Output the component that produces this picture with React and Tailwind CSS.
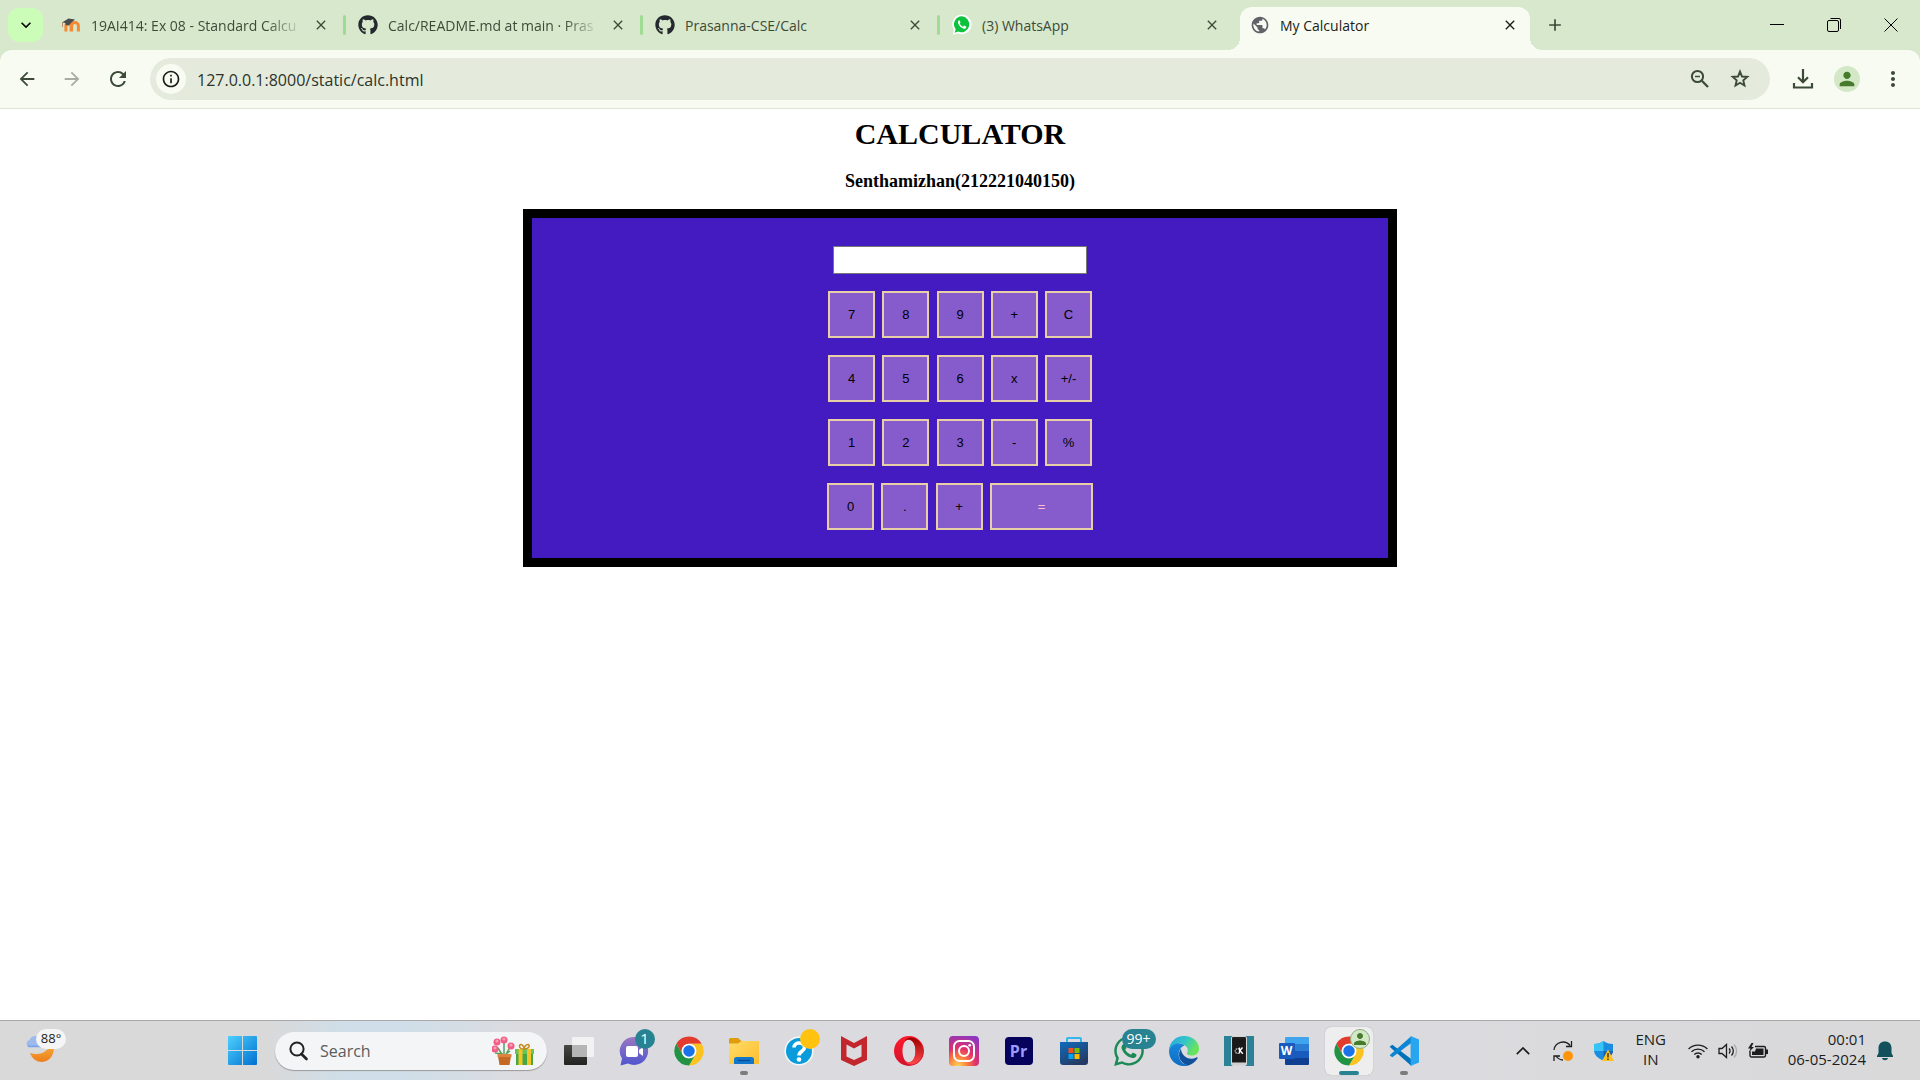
import React from "react";
import {
  MdArrowBack,
  MdArrowForward,
  MdRefresh,
  MdInfoOutline,
  MdPublic,
  MdPerson,
  MdMoreVert,
  MdClose,
  MdAdd,
  MdExpandMore,
} from "react-icons/md";
import { FaWhatsapp, FaGithub } from "react-icons/fa";

/* ---------- browser icons ---------- */

function MoodleIcon() {
  return (
    <svg viewBox="0 0 20 16" className="h-4 w-5 shrink-0">
      <path d="M4.9 14.5V9a2.6 2.6 0 0 1 5.2 0v5.5M10.600 14.500V9a3.300 3.300 0 0 1 6.800 0v5.500" fill="none" stroke="#f58a32" strokeWidth="3" />
      <path d="M1 5.500 7.500 1.500 14 2.500 9.500 6.500 8 8.500 4.500 8V6z" fill="#4b4b4b" />
      <path d="M1.500 5.500V10" stroke="#b98f68" strokeWidth="1" />
    </svg>
  );
}

function WhatsAppFavicon() {
  return (
    <svg viewBox="0 0 20 22" className="h-[22px] w-5 shrink-0">
      <path d="M10 .8a9.400 9.400 0 0 1 0 19.400c-1.600 0-3-.4-4.200-1L.8 20.800l1.300-5A9.500 9.500 0 0 1 10 .8z" fill="#fff" />
      <path d="M10 2.300a8 8 0 1 1-3.900 15.300L2.700 18.700l1-3.500A8 8 0 0 1 10 2.300z" fill="#0ac23c" />
      <path d="M7 6.300c-1.200.8-1.300 2.100-.7 3.400 1 2.300 2.700 4 5 4.800 1.300.5 2.600.2 3-1.300l-.2-.8-1.900-.9-1.200 1.200c-1.500-.6-2.600-1.700-3.300-3.100l.8-1.100-.8-2z" fill="#fff" />
    </svg>
  );
}

function ZoomOutIcon() {
  return (
    <svg viewBox="0 0 20 20" className="size-5" fill="none" stroke="currentColor" strokeWidth="2">
      <circle cx="7.500" cy="7.500" r="5.600" />
      <path d="M11.800 11.800 18 18" strokeWidth="2.300" />
      <path d="M5 7.500h5" strokeWidth="1.500" />
    </svg>
  );
}

function StarIcon() {
  return (
    <svg viewBox="0 0 20 20" className="size-5" fill="none" stroke="currentColor" strokeWidth="1.900">
      <path d="M10 2.600 12 7.500l5.300.4-4 3.500 1.200 5.200L10 13.800l-4.500 2.800 1.200-5.200-4-3.500 5.300-.4z" />
    </svg>
  );
}

function DownloadIcon() {
  return (
    <svg viewBox="0 0 22 22" className="size-[22px]" fill="none" stroke="#3c4b38" strokeWidth="2.200">
      <path d="M11 1v13M6 9.300l5 5 5-5M2 15v4.500h18V15" />
    </svg>
  );
}

/* ---------- taskbar icons ---------- */

function WeatherIcon() {
  return (
    <svg viewBox="0 0 30 30" className="size-[30px]">
      <defs>
        <linearGradient id="moon" x1="0" y1="0" x2="0" y2="1">
          <stop offset="0" stopColor="#f5b43a" />
          <stop offset="1" stopColor="#ee7d1c" />
        </linearGradient>
      </defs>
      <path d="M28 9c3 9-2 19-11 19-5 0-10-3-12-9 11 3 19-2 20-9z" fill="url(#moon)" />
      <path d="M3.500 13a3.800 3.800 0 0 1 1-7C6 1.500 12 .5 15 4l2 9z" fill="#9db9ee" />
      <path d="M2 11.500h15v1.800H3.500z" fill="#7ba4ec" />
    </svg>
  );
}

function StartIcon() {
  return (
    <svg viewBox="0 0 29 29" className="size-[29px]">
      <defs>
        <linearGradient id="win" x1="0" y1="0" x2="1" y2="1">
          <stop offset="0" stopColor="#4cd0fd" />
          <stop offset="1" stopColor="#0070d1" />
        </linearGradient>
      </defs>
      <path d="M1 0h13v14H0V1a1 1 0 0 1 1-1zM15 0h13a1 1 0 0 1 1 1v13H15zM0 15h14v14H1a1 1 0 0 1-1-1zM15 15h14v13a1 1 0 0 1-1 1H15z" fill="url(#win)" />
    </svg>
  );
}

function SearchGlass() {
  return (
    <svg viewBox="0 0 20 20" className="size-5" fill="none" stroke="#222" strokeWidth="2">
      <circle cx="8" cy="8" r="6.600" />
      <path d="M12.500 13l5 5" strokeWidth="2.600" strokeLinecap="round" />
    </svg>
  );
}

function FlowersGift() {
  return (
    <svg viewBox="0 0 44 30" className="h-[30px] w-11">
      <path d="M11 20 6 12M12 20V7M13 20l5-9M11 18l-8-1M14 18l4-3" stroke="#58a060" strokeWidth="1.500" />
      <path d="M6 20h13l-1.500 9h-10z" fill="#c46a25" />
      <path d="M5.500 18h14v3h-14z" fill="#dd8440" />
      {[[12, 4], [5, 6], [3, 13], [19, 10]].map(([x, y]) => (
        <g key={x}>
          <circle cx={x} cy={y} r="3.500" fill="#f25d86" />
          <circle cx={x} cy={y - 1} r="1.600" fill="#fb9cb5" />
        </g>
      ))}
      <path d="M24 17h17v12H24z" fill="#43a845" />
      <path d="M23 13h19v5H23z" fill="#66c45c" />
      <path d="M26.500 13h4v16h-4zM35 13h4v16h-4z" fill="#f6c426" />
      <path d="M32 13c-6 0-5-5-3-4.500 2 .5 3 2.500 3 4.500 0-2 2-4.500 4-4.500 2 0 2 4.500-4 4.500z" fill="none" stroke="#c98a1c" strokeWidth="1.500" />
    </svg>
  );
}

function TaskViewIcon() {
  return (
    <svg viewBox="0 0 30 30" className="size-[30px]">
      <defs>
        <linearGradient id="tvd" x1="0" y1="0" x2="0" y2="1">
          <stop offset="0" stopColor="#484845" />
          <stop offset="1" stopColor="#222220" />
        </linearGradient>
      </defs>
      <rect x="0" y="9" width="23" height="20" rx="1" fill="url(#tvd)" />
      <rect x="8" y="1" width="22" height="20" rx="1" fill="#f4f4f4" fillOpacity=".92" />
      <path d="M8 9h15v12H8z" fill="#b5b5b5" />
    </svg>
  );
}

function TeamsIcon() {
  return (
    <svg viewBox="0 0 30 30" className="size-[30px]">
      <defs>
        <linearGradient id="teams" x1="0" y1="0" x2="0" y2="1">
          <stop offset="0" stopColor="#9a78c0" />
          <stop offset="1" stopColor="#4f55cf" />
        </linearGradient>
      </defs>
      <path d="M15 1a14 14 0 1 1-6 26.600L1.500 29.500 3 22.500A14 14 0 0 1 15 1z" fill="url(#teams)" />
      <rect x="7" y="10" width="12" height="11" rx="2" fill="#fff" />
      <path d="m20 14 4-3v9l-4-3z" fill="#fff" />
    </svg>
  );
}

function ChromeIcon() {
  return (
    <svg viewBox="1 1 46 46" className="size-[30px]">
      <path d="M4.600 12.800A22.400 22.400 0 0 1 43.400 12.800H24A11.200 11.200 0 0 0 14.300 29.600z" fill="#e33b2e" />
      <path d="M43.400 12.800A22.400 22.400 0 0 1 24 46.400L33.700 29.600A11.200 11.200 0 0 0 24 12.800z" fill="#fcc31e" />
      <path d="M24 46.400A22.400 22.400 0 0 1 4.600 12.800L14.300 29.600A11.200 11.200 0 0 0 33.700 29.600z" fill="#229342" />
      <circle cx="24" cy="24" r="11.200" fill="#fff" />
      <circle cx="24" cy="24" r="8.800" fill="#1a73e8" />
    </svg>
  );
}

function ExplorerIcon() {
  return (
    <svg viewBox="0 0 30 28" className="h-7 w-[30px]">
      <defs>
        <linearGradient id="folder" x1="0" y1="0" x2="1" y2="1">
          <stop offset="0" stopColor="#ffdc6a" />
          <stop offset="1" stopColor="#fdbd2c" />
        </linearGradient>
      </defs>
      <path d="M0 2.500A1.500 1.500 0 0 1 1.500 1H9l3.500 3H28v5H0z" fill="#df9d0b" />
      <path d="M0 6.500h9L12.500 4H29a1 1 0 0 1 1 1v22H0z" fill="url(#folder)" />
      <path d="M5 27v-4.500A2.500 2.500 0 0 1 7.500 20h15a2.500 2.500 0 0 1 2.500 2.500V27z" fill="#1177cd" />
      <path d="M9 23.500h12" stroke="#0c4a8c" strokeWidth="1.200" />
    </svg>
  );
}

function HelpIcon() {
  return (
    <svg viewBox="0 0 30 30" className="size-[30px]">
      <circle cx="15" cy="15" r="14.500" fill="#f3f8fb" />
      <circle cx="15" cy="15" r="13" fill="#0a9bdc" />
      <path d="M10 11.500c0-6 10.500-6 10.500 0 0 4-5.500 3.500-5.500 8" fill="none" stroke="#fff" strokeWidth="3.600" />
      <circle cx="15" cy="23.500" r="2.300" fill="#fff" />
    </svg>
  );
}

function McAfeeIcon() {
  return (
    <svg viewBox="0 0 28 30" className="h-[30px] w-7">
      <path d="M1 0 14 7 27 0v24l-13 6L1 24z" fill="#c1272d" />
      <path d="M6.500 8.500 14 12.500l7.500-4v12L14 24l-7.500-3.500z" fill="#dcdce0" />
    </svg>
  );
}

function OperaIcon() {
  return (
    <svg viewBox="0 0 30 30" className="size-[30px]">
      <defs>
        <linearGradient id="op1" x1="0" y1="0" x2="0" y2="1">
          <stop offset="0" stopColor="#ff1b2d" />
          <stop offset="1" stopColor="#d3122c" />
        </linearGradient>
        <linearGradient id="op2" x1="0" y1="0" x2="0" y2="1">
          <stop offset="0" stopColor="#9c0000" />
          <stop offset="1" stopColor="#ff4b4b" />
        </linearGradient>
      </defs>
      <path fillRule="evenodd" d="M15 0a15 15 0 1 0 0 30 15 15 0 0 0 0-30zM15 3.500c4 0 6.500 5 6.500 11.500S19 26.500 15 26.500 8.500 21.500 8.500 15 11 3.500 15 3.500z" fill="url(#op1)" />
      <path d="M10.500 5.500C12 3 14 1.500 17 1.500c7 0 12 6.500 12 13.500s-5 13.500-12 13.500c-3 0-5-1.500-6.500-4 5 4.500 11 0 11-9.500s-6-14-11-9.500z" fill="url(#op2)" />
    </svg>
  );
}

function InstagramIcon() {
  return (
    <svg viewBox="0 0 30 30" className="size-[30px]">
      <defs>
        <radialGradient id="ig" cx=".3" cy="1" r="1.100">
          <stop offset="0" stopColor="#ffd65c" />
          <stop offset=".3" stopColor="#fb7a3c" />
          <stop offset=".55" stopColor="#e0306d" />
          <stop offset="1" stopColor="#8a37c4" />
        </radialGradient>
      </defs>
      <rect width="30" height="30" rx="4" fill="url(#ig)" />
      <g fill="none" stroke="#fff" strokeWidth="2">
        <rect x="5" y="5" width="20" height="20" rx="5.500" />
        <circle cx="15" cy="15" r="5" />
      </g>
      <circle cx="20.700" cy="9.300" r="1.400" fill="#fff" />
    </svg>
  );
}

function PremiereIcon() {
  return (
    <span className="flex size-[28px] items-center justify-center rounded-[4px] bg-[#06035c] font-['Open_Sans',sans-serif] text-base font-bold leading-none text-[#9b9bff]">
      Pr
    </span>
  );
}

function StoreIcon() {
  return (
    <svg viewBox="0 0 30 30" className="size-[30px]">
      <defs>
        <linearGradient id="bag" x1="0" y1="0" x2=".6" y2="1">
          <stop offset="0" stopColor="#0f6cbd" />
          <stop offset="1" stopColor="#243a63" />
        </linearGradient>
      </defs>
      <path d="M8 7V3a1 1 0 0 1 1-1h12a1 1 0 0 1 1 1v4" fill="none" stroke="#32b8ee" strokeWidth="2" />
      <path d="M1 6h28v20a3 3 0 0 1-3 3H4a3 3 0 0 1-3-3z" fill="url(#bag)" />
      <path d="M9.500 12h5v5h-5z" fill="#f25022" />
      <path d="M15.500 12h5v5h-5z" fill="#7fba00" />
      <path d="M9.500 18h5v5h-5z" fill="#00a4ef" />
      <path d="M15.500 18h5v5h-5z" fill="#ffb900" />
    </svg>
  );
}

function EdgeIcon() {
  return (
    <svg viewBox="0 0 30 30" className="size-[30px]">
      <defs>
        <linearGradient id="ed1" x1="0" y1="0" x2="1" y2=".4">
          <stop offset="0" stopColor="#2aa5e2" />
          <stop offset=".55" stopColor="#32c5c8" />
          <stop offset="1" stopColor="#6be558" />
        </linearGradient>
        <linearGradient id="ed2" x1="0" y1="0" x2="0" y2="1">
          <stop offset="0" stopColor="#1787db" />
          <stop offset="1" stopColor="#0f6dc4" />
        </linearGradient>
      </defs>
      <path d="M0 15C0 6 7 0 15 0c9 0 15 6 15 12.500 0 4.500-3 7-7 7s-5.500-1.500-5-2.500c1.500-1.500 1-5.500-2-7.500C11 6 3 8 0 15z" fill="url(#ed1)" />
      <path d="M0 15C2 7 11 6 15.500 9.500 11 11 9 16 10 21s5 8 10 8c-2 1-3.500 1-5 1C6 30 0 23 0 15z" fill="url(#ed2)" />
      <path d="M12 12.500C8 18 10 27 19 29.500c4-1 7-3.500 9.500-7 .5-1-.5-1.500-1.500-.8C20 25 12 20 12 12.500z" fill="#11509a" />
    </svg>
  );
}

function PhoneIcon() {
  return (
    <svg viewBox="0 0 30 30" className="size-[30px]">
      <path d="M0 0h30v30H0z" fill="#2b8195" />
      <rect x="7.500" y=".5" width="15" height="29" rx="1.500" fill="#202020" stroke="#d6d6d6" />
      <path d="M8 26.500h14v2.500H8z" fill="#d0d0d0" />
      <path d="M9 3h12v22.500H9z" fill="#191919" />
      <circle cx="13.500" cy="15" r="2.300" fill="none" stroke="#ddd" strokeWidth="1.200" strokeDasharray="1.200 .8" />
      <path d="M15.500 11.500v6M18.500 11.500 16 14.500l2.800 3.200" fill="none" stroke="#fff" strokeWidth="1.300" />
    </svg>
  );
}

function WordIcon() {
  return (
    <span className="relative flex h-[28px] w-[30px] items-center">
      <svg viewBox="0 0 30 28" className="absolute inset-0 h-7 w-[30px]">
        <path d="M6 1a1 1 0 0 1 1-1h22a1 1 0 0 1 1 1v6H6z" fill="#41a5ee" />
        <path d="M6 7h24v7H6z" fill="#2b7cd3" />
        <path d="M6 14h24v7H6z" fill="#185abd" />
        <path d="M6 21h24v6a1 1 0 0 1-1 1H7a1 1 0 0 1-1-1z" fill="#103f91" />
        <rect x="0" y="6" width="16" height="16" rx="1" fill="#185abd" />
      </svg>
      <span className="relative w-4 text-center font-['Open_Sans',sans-serif] text-[12px] font-bold leading-none text-white">W</span>
    </span>
  );
}

function VsCodeIcon() {
  return (
    <svg viewBox="0 0 100 100" className="size-[30px]">
      <path d="M2 36l9-7 63 48v22z" fill="#0072bc" />
      <path d="M2 64l9 7 63-48V1z" fill="#0a86d4" />
      <path d="M72 0l28 12v76l-28 12z" fill="#27a5ee" />
    </svg>
  );
}

function SyncIcon() {
  return (
    <svg viewBox="0 0 22 22" className="size-[22px]" fill="none" stroke="#1d1d1d" strokeWidth="1.300">
      <path d="M2 10a9 9 0 0 1 16-4.500M19.500 1v5.500H14M4 16a9 9 0 0 0 7 4M2 21v-5h6" />
      <circle cx="16" cy="16" r="5" fill="#ff9408" stroke="none" />
    </svg>
  );
}

function ShieldIcon() {
  return (
    <svg viewBox="0 0 20 20" className="size-5">
      <path d="M9.500 0C12 2 15 3 19 3v6c0 5-4 8.500-9.500 10.500C4 17.500 0 14 0 9V3c4 0 7-1 9.500-3z" fill="#1b8de0" />
      <path d="M9.500 0v10H0V3c4 0 7-1 9.500-3z" fill="#36c3f5" />
      <path d="M9.500 10H19c-.5 4.500-4.500 7.500-9.500 9.500z" fill="#1464b4" />
      <path d="M14 8.500 20 20H8z" fill="#fcc21b" />
      <path d="M14 12v4.500M14 17.500V19" stroke="#222" strokeWidth="1.300" />
    </svg>
  );
}

function WifiIcon() {
  return (
    <svg viewBox="0 0 20 16" className="h-4 w-5" fill="none" stroke="#1d1d1d" strokeWidth="1.400">
      <path d="M.6 6a13.300 13.300 0 0 1 18.800 0M3.500 8.800a9.200 9.200 0 0 1 13 0M6.300 11.500a5.200 5.200 0 0 1 7.400 0" />
      <circle cx="10" cy="13.700" r="1.700" fill="#1d1d1d" stroke="none" />
    </svg>
  );
}

function SpeakerIcon() {
  return (
    <svg viewBox="0 0 20 16" className="h-4 w-5" fill="none" stroke="#1d1d1d" strokeWidth="1.300">
      <path d="M1 5.500h3l4.500-4v13L4 10.500H1z" />
      <path d="M11 5.500a3.500 3.500 0 0 1 0 5M13.500 3.500a6.500 6.500 0 0 1 0 9" />
      <path d="M16 1.500a9.500 9.500 0 0 1 0 13" stroke="#aaa" />
    </svg>
  );
}

function BatteryIcon() {
  return (
    <svg viewBox="0 0 20 16" className="h-4 w-5">
      <path d="M7 3.500h9a1.500 1.500 0 0 1 1.500 1.500v7.500A1.500 1.500 0 0 1 16 14H3.500A1.500 1.500 0 0 1 2 12.500V8" fill="none" stroke="#1d1d1d" strokeWidth="1.400" />
      <path d="M8 5.500h7.500V12H4V8.500h3zM18 6.500h2V11h-2zM3.500 0 0 5.500h2.500L1 9l5-5H3.500L5.500 0z" fill="#1d1d1d" />
    </svg>
  );
}

function BellIcon() {
  return (
    <svg viewBox="0 0 16 20" className="h-5 w-4">
      <path d="M8 .5c4 0 6.500 2.700 6.500 6.500v5l1.500 3v1H0v-1l1.500-3V7C1.500 3.200 4 .5 8 .5zM5 17h6c-.5 3-5.500 3-6 0z" fill="#12505c" />
    </svg>
  );
}

/* ---------- browser chrome ---------- */

const tabs = [
  { title: "19AI414: Ex 08 - Standard Calcu", icon: <MoodleIcon />, fade: true },
  { title: "Calc/README.md at main · Pras", icon: <FaGithub className="size-5 shrink-0 text-[#24292f]" />, fade: true },
  { title: "Prasanna-CSE/Calc", icon: <FaGithub className="size-5 shrink-0 text-[#24292f]" /> },
  { title: "(3) WhatsApp", icon: <WhatsAppFavicon /> },
];

function Tab({ icon, title, fade, last }) {
  return (
    <div className="relative flex h-[50px] w-[297px] min-w-0 items-center pl-3 pr-[17px] text-[#3c4b38]">
      {icon}
      <span className="ml-2.5 min-w-0 flex-1 pt-px text-sm">
        <span
          className={
            "whitespace-nowrap" +
            (fade ? " inline-block [mask-image:linear-gradient(to_right,black_86%,rgba(0,0,0,0.2))]" : "")
          }
        >
          {title}
        </span>
      </span>
      <button aria-label={"Close " + title} className="flex size-4 items-center justify-center">
        <MdClose className="size-4" />
      </button>
      {!last && <span className="absolute right-0 h-5 w-[3px] rounded-full bg-[#9fdb93]" />}
    </div>
  );
}

function TabStrip() {
  return (
    <header className="flex h-[50px] bg-[#d8e8cd]">
      <button aria-label="Search tabs" className="ml-2 mr-1.5 mt-2 flex h-[34px] w-[35px] shrink-0 items-center justify-center rounded-[11px] bg-[#cbfdb9]">
        <MdExpandMore className="size-5 text-black" />
      </button>
      {tabs.map((t, i) => (
        <Tab key={t.title} {...t} last={i === tabs.length - 1} />
      ))}
      <div className="relative ml-[3px] mt-[7px] flex h-[43px] w-[290px] min-w-0 items-center rounded-t-xl bg-[#f8fbf2] pb-[7px] pl-2.5 pr-3 text-[#1a1c18]">
        <span className="absolute -left-3 bottom-0 size-3 bg-[radial-gradient(circle_at_0_0,#d8e8cd_12px,#f8fbf2_12px)]" />
        <span className="absolute -right-3 bottom-0 size-3 bg-[radial-gradient(circle_at_100%_0,#d8e8cd_12px,#f8fbf2_12px)]" />
        <MdPublic className="size-5 shrink-0 text-[#5f6368]" />
        <span className="ml-2.5 flex-1 whitespace-nowrap pt-px text-sm">My Calculator</span>
        <button aria-label="Close My Calculator" className="flex size-4 items-center justify-center">
          <MdClose className="size-4" />
        </button>
      </div>
      <button aria-label="New tab" className="ml-[15px] flex w-5 items-center justify-center text-[#3c4b38]">
        <MdAdd className="size-5" />
      </button>
      <div className="ml-auto flex text-black">
        <button aria-label="Minimize" className="flex w-[57px] items-center justify-center">
          <svg viewBox="0 0 14 14" className="size-3.5" stroke="currentColor"><path d="M0 6.500h14" /></svg>
        </button>
        <button aria-label="Restore" className="flex w-[57px] items-center justify-center">
          <svg viewBox="0 0 14 14" className="size-3.5" fill="none" stroke="currentColor">
            <rect x=".5" y="2.500" width="11" height="11" rx="1.500" />
            <path d="M3.500.5H12A1.500 1.500 0 0 1 13.500 2v9" />
          </svg>
        </button>
        <button aria-label="Close" className="flex w-[58px] items-center justify-center">
          <svg viewBox="0 0 14 14" className="size-3.5" stroke="currentColor"><path d="M.5.5l13 13M13.500.5l-13 13" /></svg>
        </button>
      </div>
    </header>
  );
}

function Toolbar() {
  return (
    <div className="bg-[#d8e8cd]">
      <nav className="flex h-[59px] items-center rounded-t-xl border-b border-[#dde5d8] bg-[#f8fbf2] pl-4 pr-[19px] text-[#3c4b38]">
        <button aria-label="Back" className="mr-[23px]"><MdArrowBack className="size-[22px]" /></button>
        <button aria-label="Forward" className="mr-[23px] text-[#a8aca4]"><MdArrowForward className="size-[22px]" /></button>
        <button aria-label="Reload" className="mr-5"><MdRefresh className="size-6" /></button>
        <div className="flex h-[42px] flex-1 items-center rounded-full bg-[#e4ebdd] pl-1.5 pr-5">
          <button aria-label="Site information" className="flex size-[30px] items-center justify-center rounded-full bg-[#f8fbf2] text-[#1a1c18]">
            <MdInfoOutline className="size-5" />
          </button>
          <input
            aria-label="Address"
            defaultValue="127.0.0.1:8000/static/calc.html"
            className="ml-[11px] mt-0.5 flex-1 bg-transparent text-base text-[#2d332b] outline-none"
          />
          <button aria-label="Zoom" className="mr-5"><ZoomOutIcon /></button>
          <button aria-label="Bookmark this page"><StarIcon /></button>
        </div>
        <button aria-label="Downloads" className="ml-[22px] mr-5"><DownloadIcon /></button>
        <button aria-label="Profile" className="mr-[25px] flex size-[26px] items-center justify-center rounded-full bg-[#d3e8c6] text-[#467a2c]">
          <MdPerson className="size-[22px]" />
        </button>
        <button aria-label="Menu" className="flex w-4 justify-center"><MdMoreVert className="size-6 shrink-0" /></button>
      </nav>
    </div>
  );
}

/* ---------- calculator page ---------- */

const rows = [
  ["7", "8", "9", "+", "C"],
  ["4", "5", "6", "x", "+/-"],
  ["1", "2", "3", "-", "%"],
];

function Key({ label, wide }) {
  return (
    <button
      className={
        "h-[47px] border-2 border-[#e8cfa8] bg-[#865ccd] text-[13px] " +
        (wide ? "w-[103px] text-[#ffc0cb]" : "w-[47px] text-black")
      }
    >
      {label}
    </button>
  );
}

function Calculator() {
  return (
    <main className="flex flex-1 flex-col items-center bg-white px-2 pt-2 text-black">
      <h1 className="font-['Liberation_Serif',serif] text-[30px] font-bold leading-[34px]">CALCULATOR</h1>
      <h3 className="mt-5 font-['Liberation_Serif',serif] text-lg font-bold leading-5">Senthamizhan(212221040150)</h3>
      <form
        onSubmit={(e) => e.preventDefault()}
        className="mt-[18px] flex w-[874px] max-w-full flex-col items-center gap-[17px] border-[9px] border-black bg-[#431bc1] py-7 font-['Liberation_Sans',sans-serif]"
      >
        <input aria-label="Display" className="h-7 w-[254px] border border-[#767676] bg-white px-1 text-[13px]" />
        {rows.map((row) => (
          <div key={row[0]} className="flex w-[264px] justify-between">
            {row.map((k) => (
              <Key key={k} label={k} />
            ))}
          </div>
        ))}
        <div className="flex w-[266px] justify-between">
          <Key label="0" />
          <Key label="." />
          <Key label="+" />
          <Key label="=" wide />
        </div>
      </form>
    </main>
  );
}

/* ---------- taskbar ---------- */

const apps = [
  { name: "Task view", icon: <TaskViewIcon /> },
  { name: "Chat", icon: <TeamsIcon />, badge: "1" },
  { name: "Google Chrome", icon: <ChromeIcon /> },
  { name: "File Explorer", icon: <ExplorerIcon />, running: true },
  { name: "Get help", icon: <HelpIcon />, dot: true },
  { name: "McAfee", icon: <McAfeeIcon /> },
  { name: "Opera", icon: <OperaIcon /> },
  { name: "Instagram", icon: <InstagramIcon /> },
  { name: "Premiere Pro", icon: <PremiereIcon /> },
  { name: "Microsoft Store", icon: <StoreIcon /> },
  { name: "WhatsApp", icon: <FaWhatsapp className="size-[34px] shrink-0 text-[#1b8a55]" />, badge: "99+" },
  { name: "Edge", icon: <EdgeIcon /> },
  { name: "KDE Connect", icon: <PhoneIcon /> },
  { name: "Word", icon: <WordIcon /> },
  { name: "Google Chrome, profile 1", icon: <ChromeIcon />, active: true },
  { name: "Visual Studio Code", icon: <VsCodeIcon />, running: true },
];

function AppButton({ name, icon, badge, dot, running, active }) {
  return (
    <div className="flex w-[55px] justify-center">
      <button
        aria-label={name}
        className={
          "relative flex size-12 items-center justify-center rounded-md" +
          (active ? " bg-[#eeeeef] shadow-[0_0_1px_#999]" : "")
        }
      >
        {icon}
        {badge === "1" && (
          <span className="absolute right-[3px] top-0.5 flex size-5 items-center justify-center rounded-full bg-[#278292] text-[15px] leading-none text-white">1</span>
        )}
        {badge === "99+" && (
          <span className="absolute -right-[3px] top-0.5 flex h-5 w-[34px] items-center justify-center rounded-full bg-[#278292] text-sm leading-none text-white">99+</span>
        )}
        {dot && <span className="absolute right-[3px] top-0.5 size-5 rounded-full bg-[#ffc20e]" />}
        {active && (
          <span className="absolute right-[3px] top-0.5 flex size-5 items-center justify-center rounded-full border border-[#8fae80] bg-[#d3e8c6] text-[#467a2c]">
            <MdPerson className="size-[18px] shrink-0" />
          </span>
        )}
        {running && <span className="absolute bottom-0 h-1 w-2 rounded-full bg-[#7c7c7c]" />}
        {active && <span className="absolute bottom-0 h-1 w-5 rounded-full bg-[#278292]" />}
      </button>
    </div>
  );
}

function Taskbar() {
  return (
    <footer className="flex h-[60px] items-center border-t border-[#a9a9ab] bg-[linear-gradient(to_right,#d9d9da_0%,#d9d9da_14%,#cfdee8_18%,#cfdee8_21%,#dbdbdf_27%,#dbdbdf_70%,#d9d9da_100%)] text-[#1d1d1d]">
      <div className="w-[215px] pb-1 pl-[25px]">
        <button aria-label="Weather" className="relative block">
          <WeatherIcon />
          <span className="absolute -top-[5px] left-[11px] flex h-5 w-[30px] items-center justify-center rounded-full bg-[#f5f5f5] text-[13px] leading-none">88°</span>
        </button>
      </div>
      <button aria-label="Start" className="flex w-[55px] justify-center"><StartIcon /></button>
      <label className="ml-[5px] mr-1 flex h-[38px] w-[272px] items-center rounded-full bg-[#f3f5f7] pl-3.5 pr-[11px] shadow-[0_1px_1px_#999]">
        <SearchGlass />
        <input aria-label="Search" placeholder="Search" className="ml-[11px] min-w-0 flex-1 bg-transparent text-base outline-none placeholder:text-[#5c5c5c]" />
        <FlowersGift />
      </label>
      {apps.map((a) => (
        <AppButton key={a.name} {...a} />
      ))}
      <div className="ml-auto flex items-center pr-[27px]">
        <button aria-label="Show hidden icons" className="mr-[22px]">
          <svg viewBox="0 0 14 8" className="h-2 w-3.5" fill="none" stroke="currentColor" strokeWidth="1.700"><path d="M.8 7.200 7 1l6.200 6.200" /></svg>
        </button>
        <button aria-label="Update" className="mr-5"><SyncIcon /></button>
        <button aria-label="Security" className="mr-[19px]"><ShieldIcon /></button>
        <button aria-label="Input language" className="mr-[19px] w-9 pb-1 text-center text-[15px] leading-5">ENG<br />IN</button>
        <button aria-label="Network, sound and battery" className="mr-5 flex gap-2.5">
          <WifiIcon />
          <SpeakerIcon />
          <BatteryIcon />
        </button>
        <button className="mr-[11px] pb-1 text-right text-[15px] leading-5">00:01<br />06-05-2024</button>
        <button aria-label="Notifications"><BellIcon /></button>
      </div>
    </footer>
  );
}

export default function App() {
  return (
    <div className="flex min-h-screen flex-col font-['Open_Sans','Noto_Sans',sans-serif]">
      <TabStrip />
      <Toolbar />
      <Calculator />
      <Taskbar />
    </div>
  );
}
